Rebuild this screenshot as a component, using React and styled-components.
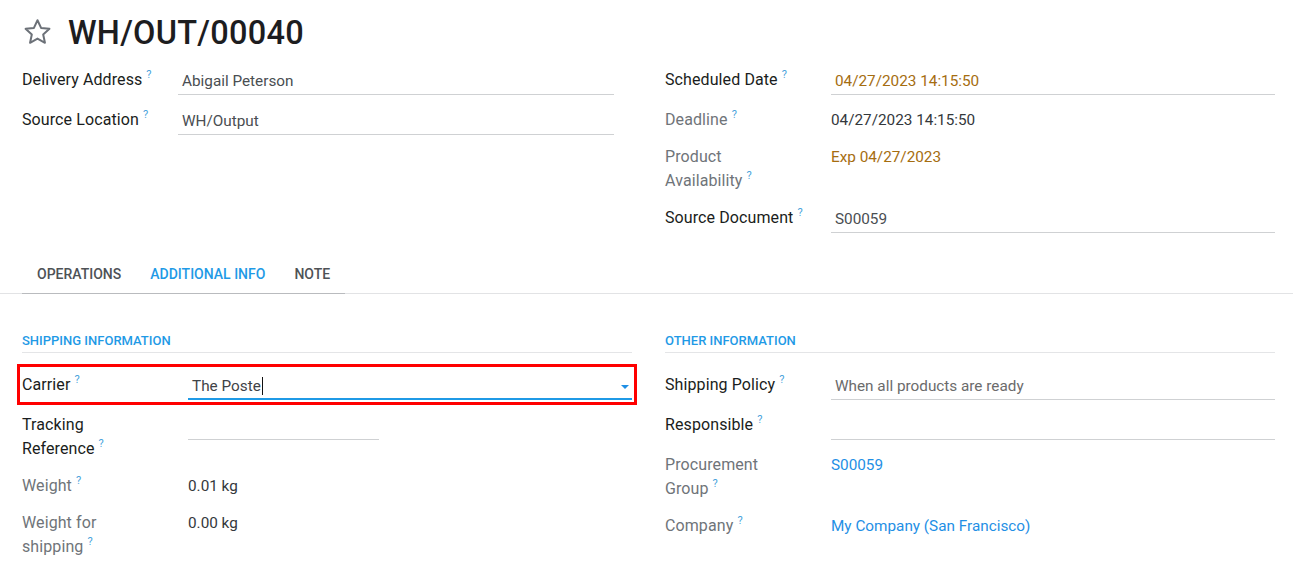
import React from "react";
import styled, { createGlobalStyle } from "styled-components";

const GlobalStyle = createGlobalStyle`
  html, body {
    margin: 0;
    padding: 0;
    background: #fff;
  }
  body {
    font-family: Roboto, "Noto Sans", "Liberation Sans", sans-serif;
    color: #212529;
    -webkit-font-smoothing: antialiased;
  }
`;

const headLeft = [
  { id: 1, label: "Delivery Address", value: "Abigail Peterson", kind: "input" },
  { id: 2, label: "Source Location", value: "WH/Output", kind: "input" },
];

const headRight = [
  { id: 1, label: "Scheduled Date", value: "04/27/2023 14:15:50", kind: "input", tone: "warn" },
  { id: 2, label: "Deadline", value: "04/27/2023 14:15:50", muted: true },
  { id: 3, label: "Product\nAvailability", value: "Exp 04/27/2023", muted: true, tone: "warn" },
  { id: 4, label: "Source Document", value: "S00059", kind: "input" },
];

const shippingRows = [
  { id: 2, label: "Tracking\nReference", value: "", kind: "input", width: "191px" },
  { id: 3, label: "Weight", value: "0.01 kg", muted: true },
  { id: 4, label: "Weight for\nshipping", value: "0.00 kg", muted: true },
];

const otherRows = [
  { id: 1, label: "Shipping Policy", value: "When all products are ready", kind: "input", tone: "soft" },
  { id: 2, label: "Responsible", value: "", kind: "input" },
  { id: 3, label: "Procurement\nGroup", value: "S00059", muted: true, tone: "link" },
  { id: 4, label: "Company", value: "My Company (San Francisco)", muted: true, tone: "link" },
];

const tabs = [
  { id: 1, label: "Operations" },
  { id: 2, label: "Additional Info", active: true },
  { id: 3, label: "Note" },
];

const StarIcon = () => (
  <svg width="31" height="30" viewBox="0 0 24 24" fill="none" stroke="#6c7178" strokeWidth="1.6" strokeLinejoin="round">
    <path d="M12 2.6l2.85 6.15 6.7.72-5 4.55 1.4 6.6L12 17.3l-5.95 3.32 1.4-6.6-5-4.55 6.7-.72z" />
  </svg>
);

// label text may hold "\n" where the original wraps, the "?" goes on the last line
const FieldLabel = ({ text, muted }) => {
  const lines = text.split("\n");
  return (
    <Label $muted={muted}>
      {lines.map((line, i) => (
        <LabelLine key={i}>
          {line}
          {i === lines.length - 1 && <Help>?</Help>}
        </LabelLine>
      ))}
    </Label>
  );
};

const Field = ({ row, labelWidth, valueWidth }) => (
  <FieldRow $labelWidth={labelWidth}>
    <FieldLabel text={row.label} muted={row.muted} />
    {row.kind === "input" ? (
      <InputValue $tone={row.tone} $width={row.width || valueWidth}>
        {row.value || "\u00a0"}
      </InputValue>
    ) : (
      <ReadValue $tone={row.tone}>{row.value}</ReadValue>
    )}
  </FieldRow>
);

const App = () => {
  return (
    <Sheet>
      <GlobalStyle />
      <Head>
        <TitleRow>
          <StarIcon />
          <Title>WH/OUT/00040</Title>
        </TitleRow>
        <Columns>
          <FieldList>
            {headLeft.map((row) => (
              <Field key={row.id} row={row} labelWidth="156px" valueWidth="436px" />
            ))}
          </FieldList>
          <FieldList>
            {headRight.map((row) => (
              <Field key={row.id} row={row} labelWidth="166px" />
            ))}
          </FieldList>
        </Columns>
      </Head>

      <TabBar>
        <TabList>
          {tabs.map((tab) => (
            <Tab key={tab.id} $active={tab.active}>
              {tab.label}
            </Tab>
          ))}
        </TabList>
      </TabBar>

      <TabBody>
        <Columns>
          <Section>
            <SectionTitle>Shipping Information</SectionTitle>
            <FieldList>
              <CarrierRow $labelWidth="166px">
                <FieldLabel text="Carrier" />
                <SelectValue>
                  The Poste<Cursor />
                  <Caret />
                </SelectValue>
              </CarrierRow>
              {shippingRows.map((row) => (
                <Field key={row.id} row={row} labelWidth="166px" />
              ))}
            </FieldList>
          </Section>
          <Section>
            <SectionTitle>Other Information</SectionTitle>
            <FieldList>
              {otherRows.map((row) => (
                <Field key={row.id} row={row} labelWidth="166px" />
              ))}
            </FieldList>
          </Section>
        </Columns>
      </TabBody>
    </Sheet>
  );
};

const toneColor = {
  warn: "#a56d10",
  link: "#1f8fe5",
  soft: "#6b6b6b",
};

const Sheet = styled.div`
  width: 100%;
  min-height: 577px;
  background: #fff;
`;

const Head = styled.div`
  padding: 13px 18px 0 22px;
`;

const TitleRow = styled.div`
  display: flex;
  align-items: center;
  gap: 15px;
  height: 40px;
  margin-bottom: 11px;

  svg {
    flex: none;
    margin-top: -2px;
  }
`;

const Title = styled.h1`
  margin: 0;
  font-size: 32.5px;
  line-height: 40px;
  font-weight: 500;
  color: #1d1d1f;
  letter-spacing: 0.25px;
`;

const Columns = styled.div`
  display: grid;
  grid-template-columns: 1fr 1fr;
  column-gap: 33px;
`;

const FieldList = styled.div`
  display: flex;
  flex-direction: column;
`;

const FieldRow = styled.div`
  display: grid;
  grid-template-columns: ${(p) => p.$labelWidth} 1fr;
  align-items: start;
  padding-top: 4px;
  margin-bottom: 9px;
`;

const CarrierRow = styled(FieldRow)`
  outline: 3px solid #ff0000;
  outline-offset: 2px;
`;

const Label = styled.div`
  font-size: 16px;
  line-height: 24px;
  font-weight: 400;
  letter-spacing: 0.1px;
  color: ${(p) => (p.$muted ? "#6f7479" : "#1a1d20")};
`;

const LabelLine = styled.div`
  white-space: nowrap;
`;

const Help = styled.span`
  display: inline-block;
  font-size: 11px;
  line-height: 13px;
  vertical-align: top;
  color: #4aa3dc;
  margin-left: 4px;
`;

const InputValue = styled.div`
  width: ${(p) => p.$width || "auto"};
  box-sizing: border-box;
  padding: 1px 4px 1px;
  border-bottom: 1px solid #cfd1d3;
  font-size: 15.3px;
  line-height: 24px;
  color: ${(p) => toneColor[p.$tone] || "#4a4e52"};
`;

const ReadValue = styled.div`
  font-size: 15.3px;
  line-height: 24px;
  color: ${(p) => toneColor[p.$tone] || "#34383c"};
`;

const SelectValue = styled.div`
  position: relative;
  display: flex;
  align-items: center;
  padding: 1px 4px 0;
  border-bottom: 2px solid #1f9ae6;
  font-size: 15.3px;
  line-height: 24px;
  color: #3f4347;
`;

const Cursor = styled.span`
  display: inline-block;
  width: 1px;
  height: 18px;
  background: #111;
  margin-left: 1px;
`;

const Caret = styled.span`
  position: absolute;
  right: 3px;
  top: 12px;
  width: 0;
  height: 0;
  border-left: 4px solid transparent;
  border-right: 4px solid transparent;
  border-top: 4px solid #1f8fe5;
`;

const TabBar = styled.div`
  margin-top: 13px;
  padding-left: 22px;
  border-bottom: 1px solid #e2e3e5;
`;

const TabList = styled.div`
  display: inline-flex;
  border-bottom: 1px solid #b9bbbe;
  margin-bottom: -1px;
`;

const Tab = styled.div`
  padding: 10px 14.5px;
  line-height: 18px;
  font-size: 14px;
  font-weight: 500;
  text-transform: uppercase;
  color: ${(p) => (p.$active ? "#1f9ae6" : "#4e5256")};

  &:first-child {
    padding-left: 15px;
  }
`;

const TabBody = styled.div`
  padding: 39px 18px 0 22px;
`;

const Section = styled.div`
  display: flex;
  flex-direction: column;
`;

const SectionTitle = styled.div`
  font-size: 13px;
  line-height: 16px;
  font-weight: 500;
  text-transform: uppercase;
  color: #1f9ae6;
  padding-bottom: 3px;
  border-bottom: 1px solid #e4e5e7;
  margin-bottom: 16px;
`;

export default App;
